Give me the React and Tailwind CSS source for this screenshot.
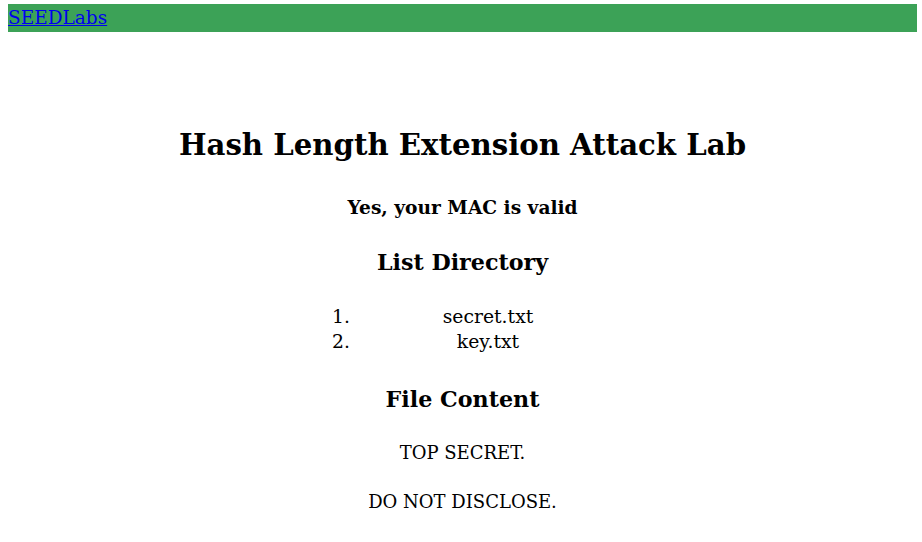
import React from 'react';

const files = ['secret.txt', 'key.txt'];

const App = () => {
  return (
    <div className="min-h-screen bg-white pl-2 pr-[5px] pt-1 text-black" style={{ fontFamily: '"DejaVu Serif", serif' }}>
      <nav className="h-7 bg-[#3ca257]">
        <a href="#" className="text-[18.5px] leading-7 text-[#0000ee] underline">
          SEEDLabs
        </a>
      </nav>

      <div className="text-center">
        <h1 className="mt-[93px] text-[29.2px] font-bold leading-[40px]">Hash Length Extension Attack Lab</h1>
        <h3 className="mt-[29px] text-[18.6px] font-bold leading-[28px]">Yes, your MAC is valid</h3>
        <h2 className="mt-[24px] text-[22.2px] font-bold leading-[32px]">List Directory</h2>
        <ol className="ml-[308px] mt-[26px] w-[304px] list-decimal pl-[40px] text-[18.8px] leading-[25px]">
          {files.map((f) => (
            <li key={f}>{f}</li>
          ))}
        </ol>
        <h2 className="mt-[29px] text-[22.2px] font-bold leading-[32px]">File Content</h2>
        <p className="mt-[24px] text-[18px] leading-[28px]">TOP SECRET.</p>
        <p className="mt-[21px] text-[18px] leading-[28px]">DO NOT DISCLOSE.</p>
      </div>
    </div>
  );
};

export default App;
